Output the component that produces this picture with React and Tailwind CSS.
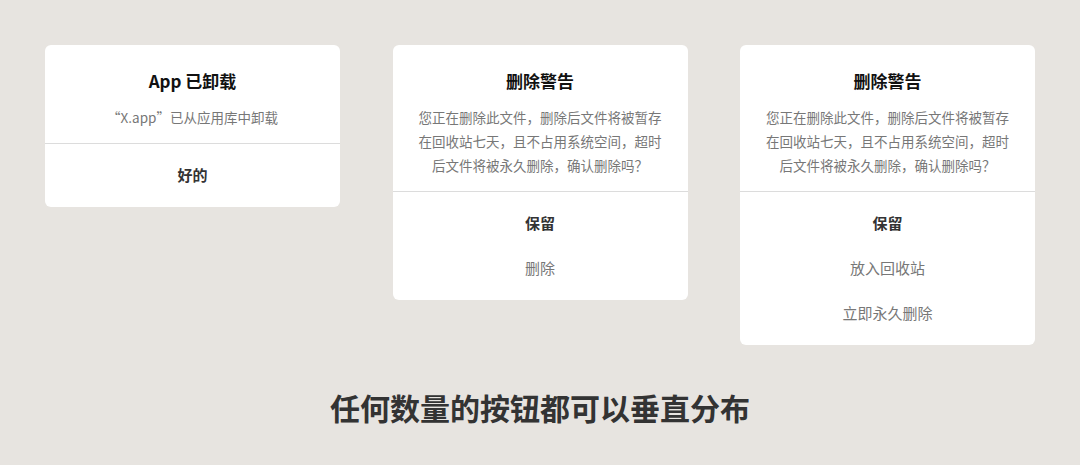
import React from 'react';

const dialogs = [
  {
    id: 1,
    title: 'App 已卸载',
    message: '“X.app”已从应用库中卸载',
    actions: [{ label: '好的', primary: true }]
  },
  {
    id: 2,
    title: '删除警告',
    message: '您正在删除此文件，删除后文件将被暂存在回收站七天，且不占用系统空间，超时后文件将被永久删除，确认删除吗？',
    actions: [
      { label: '保留', primary: true },
      { label: '删除' }
    ]
  },
  {
    id: 3,
    title: '删除警告',
    message: '您正在删除此文件，删除后文件将被暂存在回收站七天，且不占用系统空间，超时后文件将被永久删除，确认删除吗？',
    actions: [
      { label: '保留', primary: true },
      { label: '放入回收站' },
      { label: '立即永久删除' }
    ]
  }
];

const Alert = ({ dialog }) => (
  <div className="w-[295px] bg-white rounded-[6px] overflow-hidden">
    <div className="px-[25px] pt-6 pb-[14px] text-center">
      <h3 className="text-[17px] leading-6 font-semibold text-[#111]">{dialog.title}</h3>
      <p className="mt-3 text-[13.5px] leading-6 text-[#777]">{dialog.message}</p>
    </div>
    <div className="border-t border-[#dcdcdc] py-[9px]">
      {dialog.actions.map(action => (
        <button
          key={action.label}
          className={
            action.primary
              ? 'block w-full h-[45px] text-[15px] font-semibold text-[#333]'
              : 'block w-full h-[45px] text-[15px] text-[#777]'
          }
        >
          {action.label}
        </button>
      ))}
    </div>
  </div>
);

export default function App() {
  return (
    <div
      className="w-[1080px] h-[465px] bg-[#e7e4e0] flex flex-col items-center"
      style={{ fontFamily: '"Noto Sans CJK SC", "Noto Sans", sans-serif' }}
    >
      <div className="w-full flex items-start justify-between px-[45px] pt-[45px]">
        {dialogs.map(dialog => (
          <Alert key={dialog.id} dialog={dialog} />
        ))}
      </div>
      <h2 className="mt-[40px] text-[30px] leading-[44px] font-bold text-[#333]">任何数量的按钮都可以垂直分布</h2>
    </div>
  );
}
